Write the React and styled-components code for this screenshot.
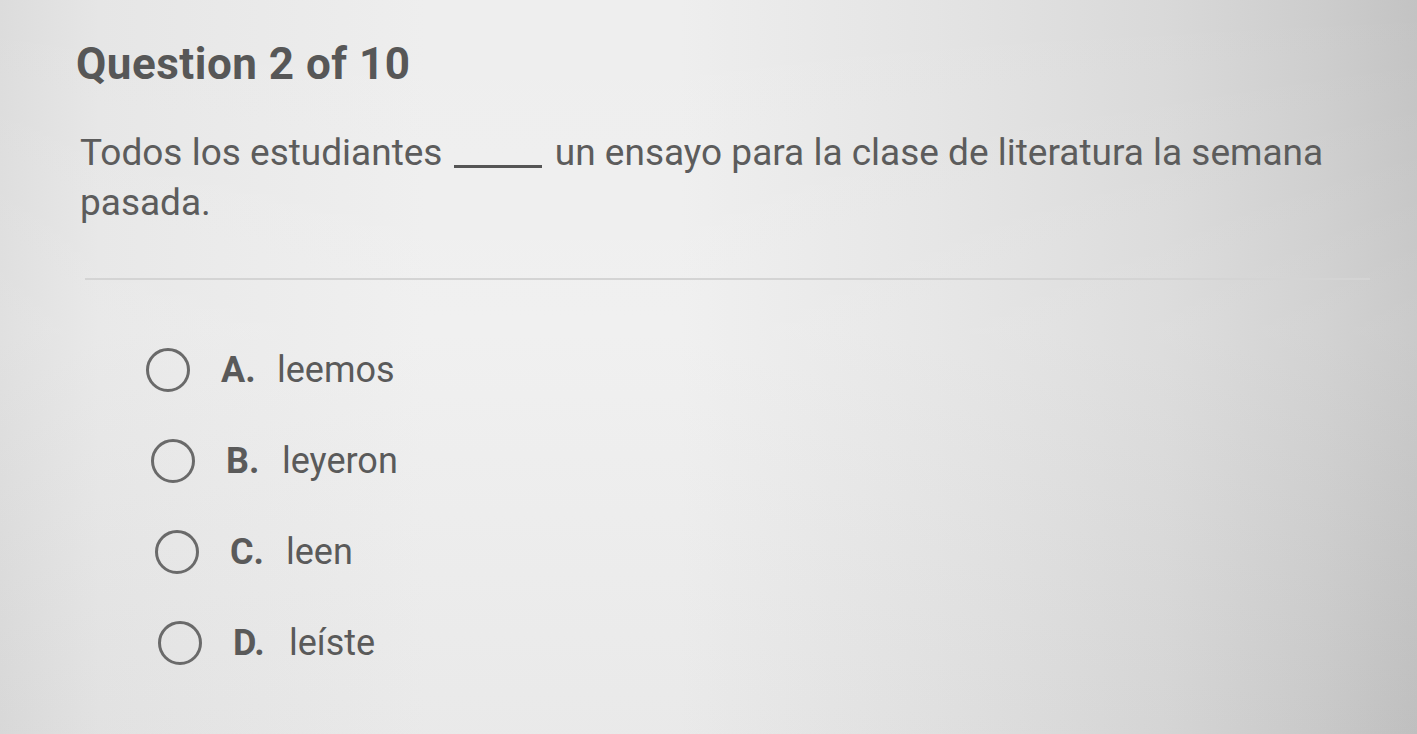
import React from "react";
import styled, { createGlobalStyle } from "styled-components";

const Global = createGlobalStyle`
  html, body { margin: 0; padding: 0; }
  body {
    font-family: Roboto, "Noto Sans", "Liberation Sans", sans-serif;
    background: #e6e6e6;
  }
`;

const Page = styled.div`
  width: 1417px;
  height: 734px;
  overflow: hidden;
  box-sizing: border-box;
  background:
    linear-gradient(180deg, rgba(255,255,255,0.0) 0%, rgba(255,255,255,0.12) 45%, rgba(0,0,0,0.02) 100%),
    linear-gradient(90deg, #dcdcdc 0%, #e6e6e6 7%, #eeeeee 30%, #eeeeee 48%, #e4e4e4 66%, #d9d9d9 82%, #cdcdcd 93%, #c3c3c3 100%);
  padding: 38px 0 0 76px;
  color: #595959;
`;

const Title = styled.h1`
  margin: 0;
  font-size: 44px;
  line-height: 52px;
  font-weight: 700;
  color: #575757;
  letter-spacing: 0.5px;
`;

const Prompt = styled.p`
  margin: 38px 0 0 4px;
  font-size: 37px;
  line-height: 50px;
  font-weight: 400;
  color: #5c5c5c;
  width: 1300px;
`;

const Line = styled.span`
  display: block;
`;

const Blank = styled.span`
  display: inline-block;
  width: 88px;
  height: 3px;
  background: #555;
  margin: 0 4px 0 2px;
  vertical-align: -3px;
`;

const Divider = styled.hr`
  margin: 50px 47px 0 9px;
  border: none;
  border-top: 2px solid #d4d4d4;
`;

const Options = styled.div`
  display: flex;
  flex-direction: column;
  gap: 47px;
  margin: 68px 0 0 70px;
`;

const Option = styled.label`
  display: flex;
  align-items: center;
  height: 44px;
  padding-left: ${(p) => p.$shift}px;
  cursor: pointer;
`;

const Radio = styled.span`
  box-sizing: border-box;
  width: 44px;
  height: 44px;
  border-radius: 50%;
  border: 3.5px solid #6a6a6a;
  flex: none;
`;

const Letter = styled.span`
  margin-left: 31px;
  font-size: 36px;
  font-weight: 700;
  color: #5a5a5a;
  width: 56px;
  flex: none;
`;

const Answer = styled.span`
  font-size: 36px;
  font-weight: 400;
  color: #5a5a5a;
`;

const options = [
  { l: "A.", t: "leemos", s: 0 },
  { l: "B.", t: "leyeron", s: 5 },
  { l: "C.", t: "leen", s: 9 },
  { l: "D.", t: "leíste", s: 12 },
];

export default function App() {
  return (
    <>
      <Global />
      <Page>
        <Title>Question 2 of 10</Title>
        <Prompt>
          <Line>
            {"Todos los estudiantes "}
            <Blank />
            {" un ensayo para la clase de literatura la semana"}
          </Line>
          <Line>pasada.</Line>
        </Prompt>
        <Divider />
        <Options>
          {options.map((o) => (
            <Option key={o.l} $shift={o.s}>
              <Radio />
              <Letter>{o.l}</Letter>
              <Answer>{o.t}</Answer>
            </Option>
          ))}
        </Options>
      </Page>
    </>
  );
}
